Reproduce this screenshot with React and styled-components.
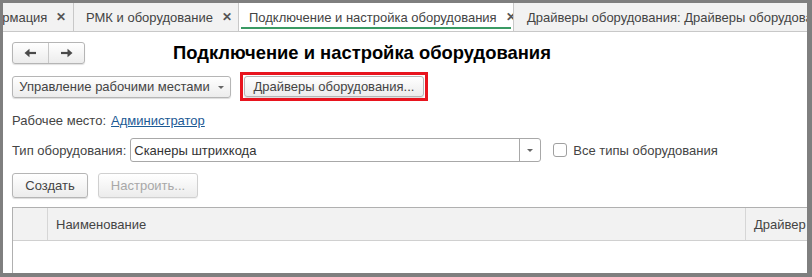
import styled, { createGlobalStyle } from 'styled-components'

const Global = createGlobalStyle`
  html, body { margin: 0; padding: 0; }
  body {
    background: #7f7f7f;
    font-family: "Liberation Sans", Arial, sans-serif;
    font-size: 13px;
    color: #444;
  }
`

const Frame = styled.div`
  width: 804px;
  height: 270px;
  margin: 3px 5px 4px 3px;
  background: #fff;
  overflow: hidden;
  display: flex;
  flex-direction: column;
`

const TabBar = styled.div`
  display: flex;
  height: 28px;
  background: #f2f2f2;
  border-bottom: 1px solid #c8c8c8;
  flex-shrink: 0;
`

const Tab = styled.div`
  display: flex;
  align-items: center;
  gap: 9px;
  padding: 0 10px 0 ${p => p.pl ?? 10}px;
  width: ${p => p.w}px;
  box-sizing: border-box;
  white-space: nowrap;
  overflow: hidden;
  border-right: ${p => (p.last ? 'none' : '1px solid #c8c8c8')};
  background: ${p => (p.active ? '#fff' : 'transparent')};
  color: #444;
  font-size: 13px;
  position: relative;
  flex-shrink: 0;
  ${p => p.active && `
    &::after {
      content: '';
      position: absolute;
      left: 2px;
      right: 2px;
      bottom: 2px;
      height: 2px;
      background: #3a9a64;
    }
  `}
`

const Close = styled.span`
  font-weight: bold;
  font-size: 12px;
  color: #555;
`

const Body = styled.div`
  padding: 9px 0 0 9px;
  display: flex;
  flex-direction: column;
`

const TitleRow = styled.div`
  display: flex;
  align-items: center;
  height: 23px;
`

const NavGroup = styled.div`
  display: flex;
  width: 73px;
  height: 22px;
  box-sizing: border-box;
  border: 1px solid #b5b5b5;
  border-radius: 3px;
  background: linear-gradient(#fff, #ececec);
  box-shadow: 0 1px 1px rgba(0,0,0,0.12);
`

const NavBtn = styled.div`
  flex: 1;
  display: flex;
  align-items: center;
  justify-content: center;
  & + & { border-left: 1px solid #c8c8c8; }
`

const Title = styled.h1`
  margin: 0 0 0 88px;
  font-size: 18.4px;
  font-weight: bold;
  color: #000;
`

const ButtonRow = styled.div`
  display: flex;
  align-items: center;
  gap: ${p => p.gap || 9}px;
  margin-top: ${p => p.mt}px;
`

const Button = styled.div`
  display: flex;
  align-items: center;
  justify-content: center;
  gap: 8px;
  height: ${p => p.h || 22}px;
  padding: 0 ${p => p.px ?? 14}px;
  box-sizing: border-box;
  border: 1px solid ${p => (p.disabled ? '#d0d0d0' : '#b5b5b5')};
  border-radius: 3px;
  background: linear-gradient(#fff, #ececec);
  box-shadow: 0 1px 1px rgba(0,0,0,${p => (p.disabled ? 0.06 : 0.14)});
  color: ${p => (p.disabled ? '#a8a8a8' : '#444')};
  white-space: nowrap;
  width: ${p => (p.w ? p.w + 'px' : 'auto')};
`

const Highlight = styled.div`
  border: 3px solid #e8141e;
  padding: 1px;
  display: flex;
`

const Caret = styled.span`
  width: 0;
  height: 0;
  border-left: 3px solid transparent;
  border-right: 3px solid transparent;
  border-top: 3px solid #666;
  margin-top: 1px;
`

const FieldRow = styled.div`
  display: flex;
  align-items: center;
  margin-top: ${p => p.mt}px;
  height: ${p => p.h || 18}px;
`

const Label = styled.span`
  color: #444;
  margin-right: ${p => p.mr || 5}px;
`

const Link = styled.a`
  color: #1c5a95;
  text-decoration: underline;
`

const Combo = styled.div`
  display: flex;
  width: 411px;
  height: 24px;
  box-sizing: border-box;
  border: 1px solid #a8a8a8;
  border-radius: 3px;
  background: #fff;
`

const ComboText = styled.div`
  flex: 1;
  display: flex;
  align-items: center;
  padding-left: 3px;
  color: #333;
`

const ComboBtn = styled.div`
  width: 20px;
  border-left: 1px solid #a8a8a8;
  display: flex;
  align-items: center;
  justify-content: center;
`

const Check = styled.span`
  width: 14px;
  height: 14px;
  box-sizing: border-box;
  border: 1px solid #a0a0a0;
  border-radius: 3px;
  margin: 0 6px 0 12px;
  background: #fff;
`

const Table = styled.div`
  margin-top: 9px;
  width: 820px;
  border: 1px solid #b0b0b0;
  border-right: none;
  height: 80px;
`

const Head = styled.div`
  display: grid;
  grid-template-columns: 34px 698px 1fr;
  height: 32px;
  background: #f2f2f2;
  border-bottom: 1px solid #d0d0d0;
`

const HeadCell = styled.div`
  display: flex;
  align-items: center;
  padding-left: 8px;
  border-left: ${p => (p.first ? 'none' : '1px solid #d6d6d6')};
  color: #444;
`

const Arrow = ({ dir }) => (
  <svg width="13" height="10" viewBox="0 0 13 10">
    <g transform={dir === 'right' ? 'scale(-1,1) translate(-13,0)' : undefined}>
      <path d="M3 5 H12" stroke="#4a4a4a" strokeWidth="2.2" />
      <path d="M0.5 5 L5.5 0.8 V9.2 Z" fill="#4a4a4a" />
    </g>
  </svg>
)

export default function App() {
  return (
    <>
      <Global />
      <Frame>
        <TabBar>
          <Tab w={71} pl={0}>
            <span style={{ marginLeft: -8 }}>ормация</span>
            <Close>✕</Close>
          </Tab>
          <Tab w={165} pl={12}>
            <span>РМК и оборудование</span>
            <Close>✕</Close>
          </Tab>
          <Tab w={275} active>
            <span>Подключение и настройка оборудования</span>
            <Close>✕</Close>
          </Tab>
          <Tab w={300} pl={13} last>
            <span>Драйверы оборудования: Драйверы оборудования</span>
          </Tab>
        </TabBar>
        <Body>
          <TitleRow>
            <NavGroup>
              <NavBtn><Arrow dir="left" /></NavBtn>
              <NavBtn><Arrow dir="right" /></NavBtn>
            </NavGroup>
            <Title>Подключение и настройка оборудования</Title>
          </TitleRow>
          <ButtonRow mt={8} gap={9}>
            <Button w={219} px={0}>
              Управление рабочими местами <Caret />
            </Button>
            <Highlight>
              <Button w={180} h={21} px={0}>Драйверы оборудования...</Button>
            </Highlight>
          </ButtonRow>
          <FieldRow mt={10}>
            <Label mr={5}>Рабочее место:</Label>
            <Link>Администратор</Link>
          </FieldRow>
          <FieldRow mt={9} h={24}>
            <Label mr={4}>Тип оборудования:</Label>
            <Combo>
              <ComboText>Сканеры штрихкода</ComboText>
              <ComboBtn><Caret /></ComboBtn>
            </Combo>
            <Check />
            <Label>Все типы оборудования</Label>
          </FieldRow>
          <ButtonRow mt={11} gap={10}>
            <Button w={76} h={25}>Создать</Button>
            <Button w={100} h={25} disabled>Настроить...</Button>
          </ButtonRow>
          <Table>
            <Head>
              <HeadCell first />
              <HeadCell>Наименование</HeadCell>
              <HeadCell>Драйвер</HeadCell>
            </Head>
          </Table>
        </Body>
      </Frame>
    </>
  )
}
